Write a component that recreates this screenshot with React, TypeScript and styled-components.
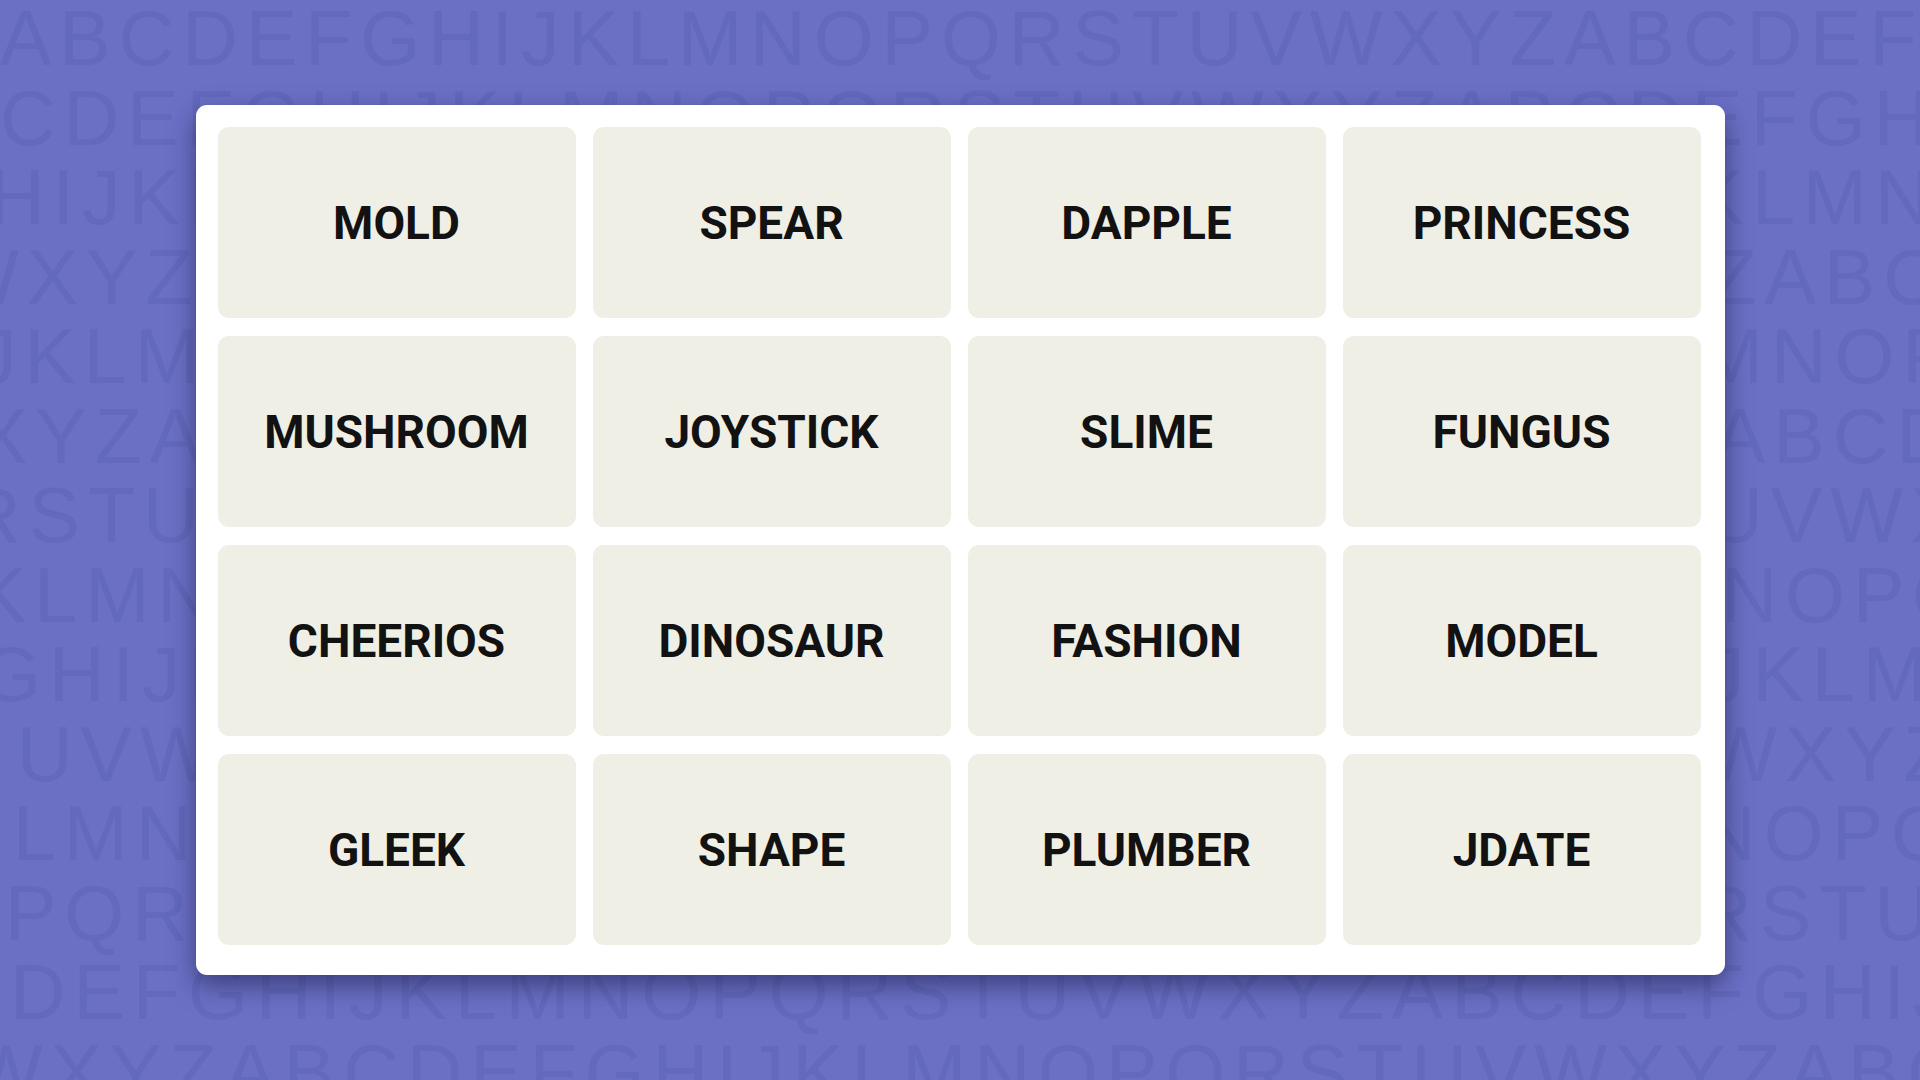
import React from 'react';
import styled, {createGlobalStyle} from 'styled-components';

const ALPHABET = 'ABCDEFGHIJKLMNOPQRSTUVWXYZ';

// each backdrop row is a run of the alphabet, starting at a given letter and nudged sideways
const BACKDROP_ROWS: {start: string; shift: number}[] = [
    {start: 'A', shift: 0},
    {start: 'C', shift: 0},
    {start: 'H', shift: -11},
    {start: 'W', shift: -54},
    {start: 'J', shift: -22},
    {start: 'X', shift: -24},
    {start: 'R', shift: -35},
    {start: 'K', shift: -25},
    {start: 'G', shift: -19},
    {start: 'U', shift: 17},
    {start: 'L', shift: 13},
    {start: 'P', shift: 5},
    {start: 'D', shift: 10},
    {start: 'W', shift: -30},
];

const WORDS = [
    'MOLD', 'SPEAR', 'DAPPLE', 'PRINCESS',
    'MUSHROOM', 'JOYSTICK', 'SLIME', 'FUNGUS',
    'CHEERIOS', 'DINOSAUR', 'FASHION', 'MODEL',
    'GLEEK', 'SHAPE', 'PLUMBER', 'JDATE',
];

const letterRun = (start: string, count = 36) => {
    const from = ALPHABET.indexOf(start);
    let out = '';
    for (let i = 0; i < count; i++) {
        out += ALPHABET[(from + i) % 26];
    }
    return out;
};

const GlobalStyle = createGlobalStyle`
    html, body {
        margin: 0;
        padding: 0;
        background: #6b70c5;
    }
`;

export default function App() {
    return (
        <>
            <GlobalStyle/>
            <Page>
                <Backdrop aria-hidden='true'>
                    {BACKDROP_ROWS.map((row, i) => (
                        <LetterRow
                            key={i}
                            $shift={row.shift}
                        >
                            {letterRun(row.start)}
                        </LetterRow>
                    ))}
                </Backdrop>
                <Stage>
                    <Board>
                        {WORDS.map((word) => (
                            <Tile key={word}>{word}</Tile>
                        ))}
                    </Board>
                </Stage>
            </Page>
        </>
    );
}

const Page = styled.div`
    display: grid;
    width: 1920px;
    height: 1080px;
    overflow: hidden;
    background: #6b70c5;
`;

const Backdrop = styled.div`
    grid-area: 1 / 1;
    display: flex;
    flex-direction: column;
    margin-top: -1px;
    overflow: hidden;
`;

const LetterRow = styled.div<{$shift: number}>`
    height: 79.5px;
    margin-left: ${({$shift}) => $shift}px;
    font-family: "Liberation Sans", Arial, sans-serif;
    font-size: 77px;
    line-height: 79.5px;
    letter-spacing: 8px;
    color: #6369bc;
    white-space: nowrap;
    user-select: none;
`;

const Stage = styled.div`
    grid-area: 1 / 1;
    display: flex;
    align-items: center;
    justify-content: center;
`;

const Board = styled.div`
    display: grid;
    grid-template-columns: repeat(4, 358px);
    grid-auto-rows: 191px;
    column-gap: 17px;
    row-gap: 18px;
    padding: 22px 24px 30px 22px;
    background: #ffffff;
    border-radius: 11px;
    box-shadow: 0 10px 26px rgba(22, 22, 64, 0.55);
`;

const Tile = styled.div`
    display: flex;
    align-items: center;
    justify-content: center;
    background: #efefe6;
    border-radius: 11px;
    font-family: Roboto, "Liberation Sans", Arial, sans-serif;
    font-weight: 700;
    font-size: 46px;
    color: #121212;
    text-transform: uppercase;
`;
